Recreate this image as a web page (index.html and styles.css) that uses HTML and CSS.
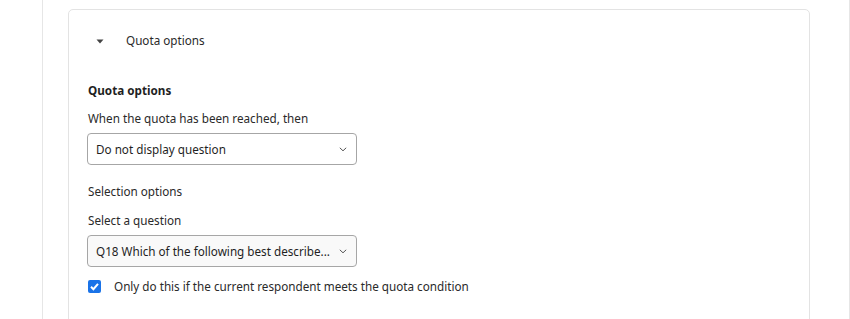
FILE: index.html
```html
<!DOCTYPE html>
<html>
<head>
<meta charset="utf-8">
<link rel="stylesheet" href="styles.css">
</head>
<body>
<div class="page">
  <div class="main">
    <div class="card">
      <div class="card-head">
        <svg class="caret" width="8" height="5" viewBox="0 0 8 5"><path d="M0.5 0.5 L7.5 0.5 L4 4.5 Z" fill="#444"/></svg>
        <span class="head-title">Quota options</span>
      </div>
      <div class="card-body">
        <h3 class="section-title">Quota options</h3>
        <label class="label">When the quota has been reached, then</label>
        <div class="select">
          <span class="select-text">Do not display question</span>
          <svg class="chev" width="8" height="5" viewBox="0 0 8 5"><path d="M0.8 0.8 L4 3.8 L7.2 0.8" fill="none" stroke="#555" stroke-width="1"/></svg>
        </div>
        <div class="sub-title">Selection options</div>
        <label class="label">Select a question</label>
        <div class="select select-gray">
          <span class="select-text">Q18 Which of the following best describe...</span>
          <svg class="chev" width="8" height="5" viewBox="0 0 8 5"><path d="M0.8 0.8 L4 3.8 L7.2 0.8" fill="none" stroke="#555" stroke-width="1"/></svg>
        </div>
        <div class="check-row">
          <span class="checkbox">
            <svg width="13" height="13" viewBox="0 0 13 13"><path d="M3 6.8 L5.4 9.2 L10 3.8" fill="none" stroke="#fff" stroke-width="2"/></svg>
          </span>
          <span class="check-label">Only do this if the current respondent meets the quota condition</span>
        </div>
      </div>
    </div>
  </div>
  <div class="side"></div>
</div>
</body>
</html>
```
FILE: styles.css
```css
* { box-sizing: border-box; }
html, body { margin: 0; padding: 0; background: #fff; }
body {
  font-family: "Noto Sans", "Open Sans", sans-serif;
  color: #1f1f1f;
  width: 850px;
  height: 319px;
  overflow: hidden;
}
.page {
  display: flex;
  height: 319px;
  overflow: hidden;
}
.main {
  width: 835px;
  margin-left: 42px;
  border-left: 1px solid #e6e6e6;
  padding: 9px 25px 0 25px;
}
.side {
  flex: 1;
  background: #f8f8f8;
  border-left: 1px solid #e6e6e6;
}
.card {
  width: 742px;
  height: 330px;
  border: 1px solid #e3e3e3;
  border-radius: 5px;
  background: #fff;
}
.card-head {
  display: flex;
  align-items: center;
  height: 60px;
  padding-left: 27px;
}
.caret { margin-right: 22px; margin-top: 2px; }
.head-title { font-size: 11.7px; color: #2a2a2a; }
.card-body {
  padding: 12px 0 0 18px;
}
.section-title {
  margin: 0 0 12px 1px;
  font-size: 11.7px;
  font-weight: 700;
  line-height: 16px;
  color: #1f1f1f;
}
.label {
  display: block;
  font-size: 11.7px;
  line-height: 16px;
  margin: 0 0 7px 1px;
  color: #2a2a2a;
}
.select {
  width: 270px;
  height: 32px;
  border: 1px solid #a6a6a6;
  border-radius: 4px;
  background: #fff;
  display: flex;
  align-items: center;
  justify-content: space-between;
  padding: 0 9px 0 8px;
}
.select-gray { background: #f9f9f9; }
.select-text { font-size: 11.7px; color: #1f1f1f; white-space: nowrap; }
.chev { flex: none; margin-top: 1px; }
.sub-title {
  font-size: 11.7px;
  line-height: 16px;
  margin: 18px 0 13px 1px;
  color: #2a2a2a;
}
.check-row {
  display: flex;
  align-items: center;
  margin-top: 11px;
}
.checkbox {
  width: 13px;
  height: 13px;
  background: #1a73e8;
  border-radius: 2px;
  display: flex;
  align-items: center;
  justify-content: center;
  margin: 0 13px 0 1px;
}
.check-label { font-size: 11.7px; line-height: 16px; color: #2a2a2a; }
```
